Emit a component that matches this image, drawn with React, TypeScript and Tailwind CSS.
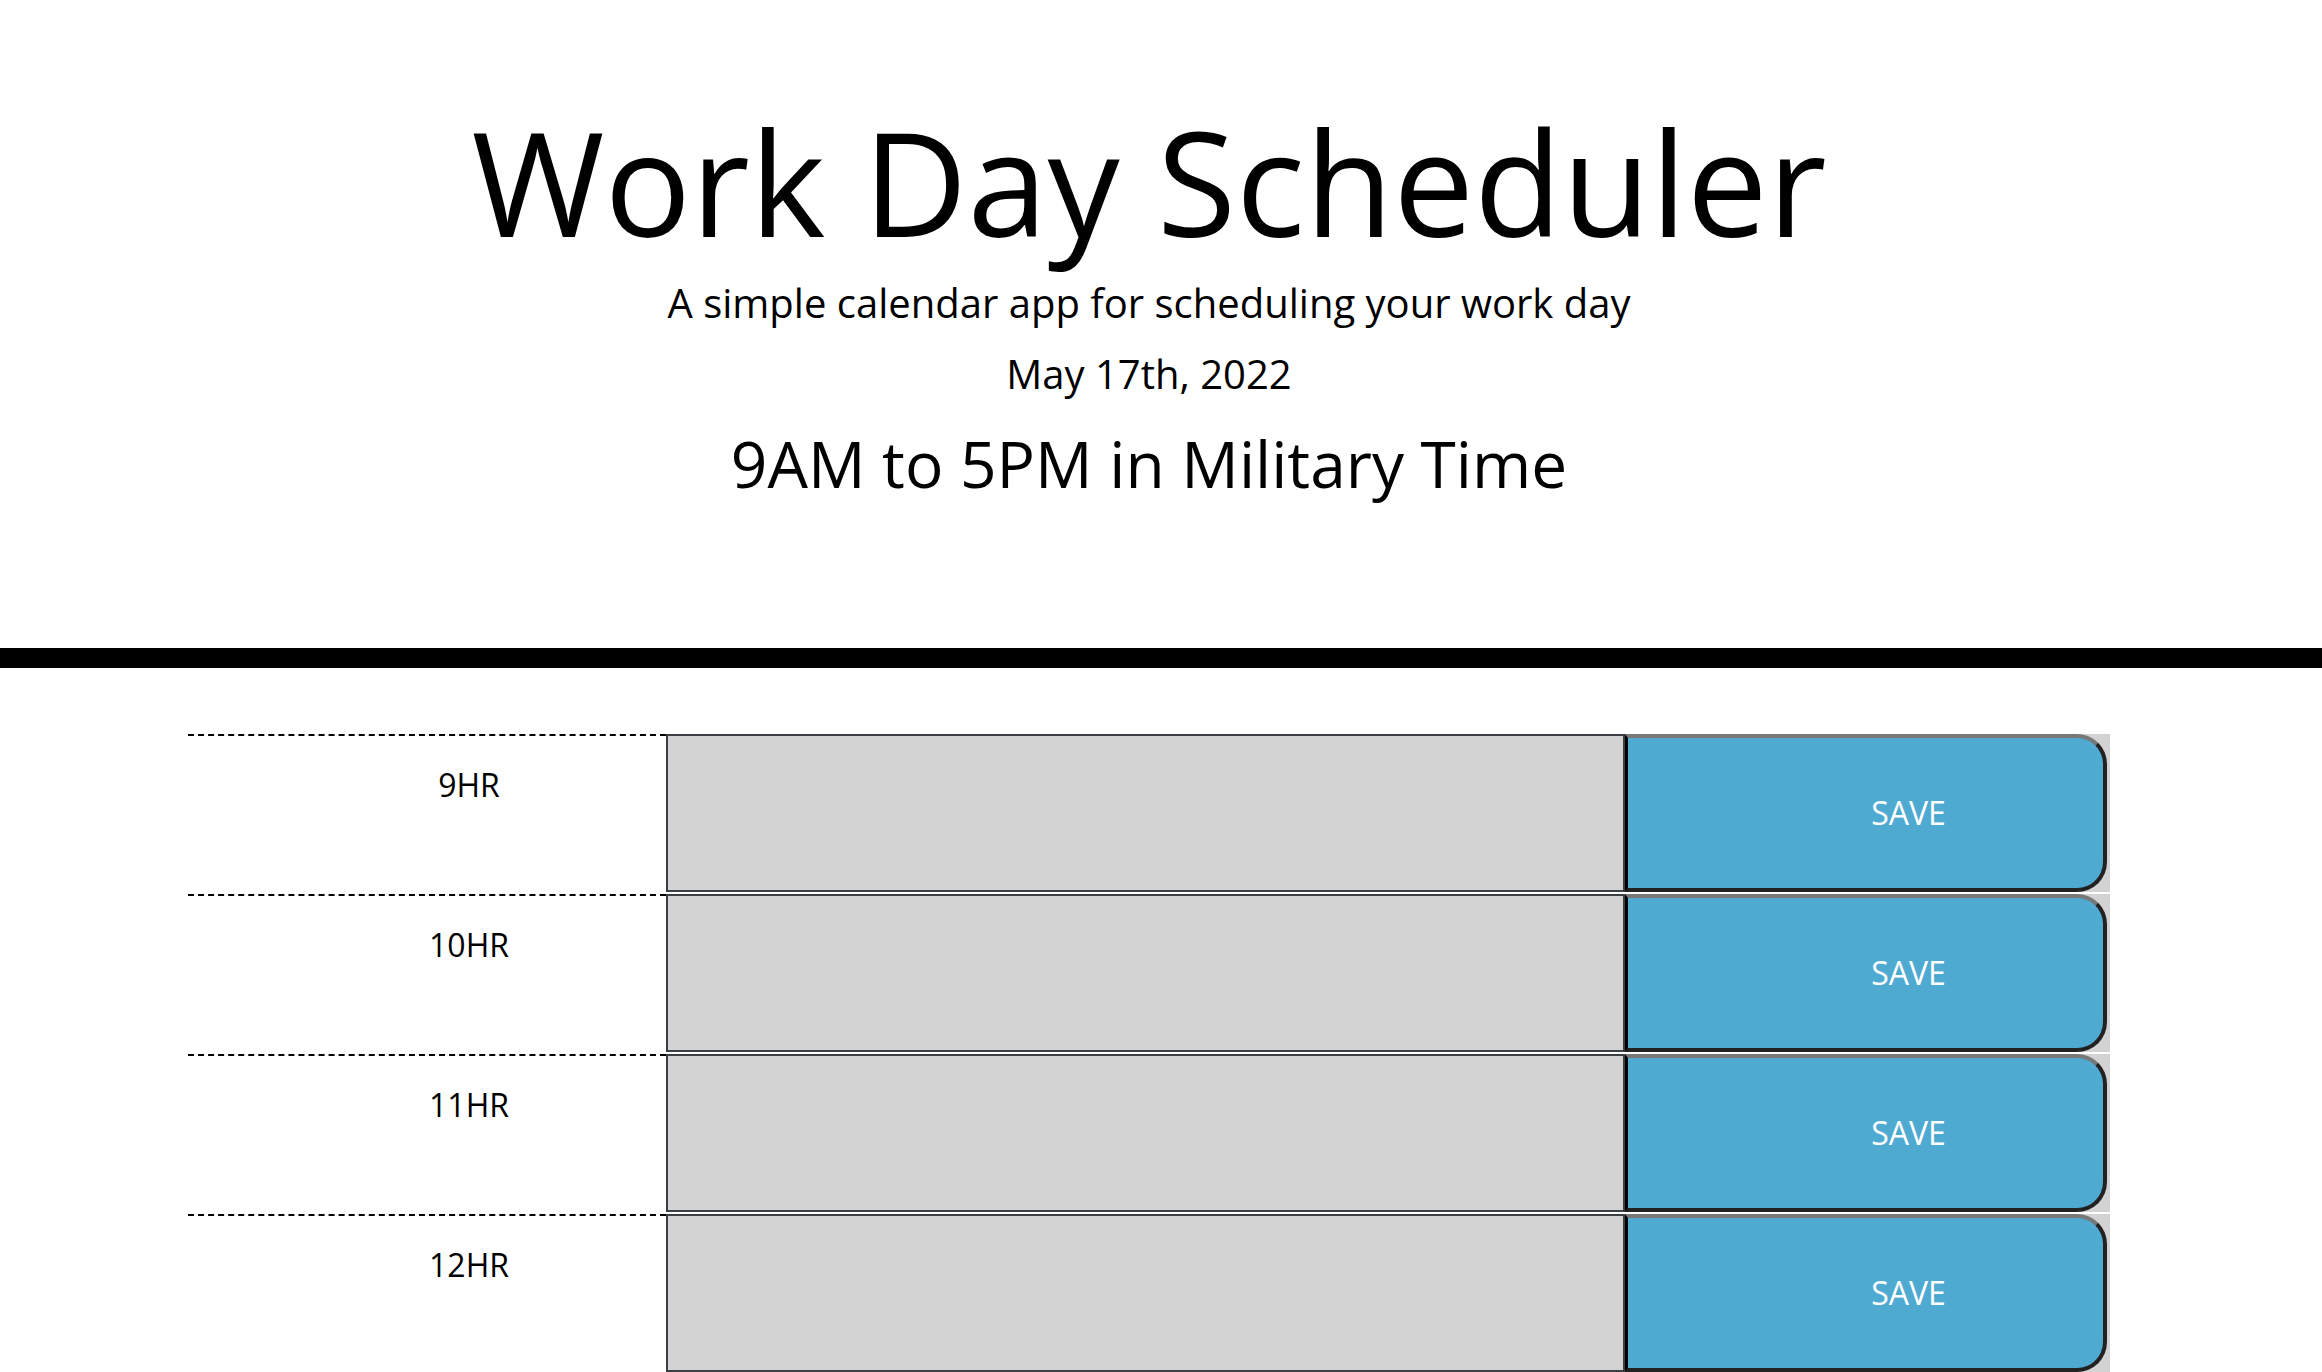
import React from "react";

const hours = [9, 10, 11, 12, 13, 14, 15, 16, 17];

export default function App() {
  return (
    <div className="min-h-screen bg-white text-black" style={{ fontFamily: '"Open Sans", "Liberation Sans", sans-serif' }}>
      <header className="text-center pt-[109px] pb-[152px] pr-[24px] border-b-[20px] border-black">
        <h1 className="text-[144px] leading-none font-normal">Work Day Scheduler</h1>
        <p className="mt-[30px] text-[40px] leading-none">A simple calendar app for scheduling your work day</p>
        <p className="mt-[31px] text-[40px] leading-none">May 17th, 2022</p>
        <h2 className="mt-[38px] text-[64px] leading-none">9AM to 5PM in Military Time</h2>
      </header>
      <main className="ml-[188px] w-[1922px] mt-[66px]">
        {hours.map((h) => (
          <div key={h} className="flex h-[160px] w-[1922px] bg-[#d3d3d3] border-b-2 border-white">
            <div className="w-[478px] shrink-0 bg-white border-t-2 border-dashed border-black pl-[84px] pt-[33px] text-center text-[32px] leading-none">
              {h}HR
            </div>
            <textarea
              className="w-[959px] shrink-0 h-full bg-transparent border-2 border-solid border-[#3c4045] resize-none p-[20px] text-[32px] outline-none"
              defaultValue=""
            />
            <button className="w-[482px] shrink-0 h-full bg-[#4faad1] text-white text-[32px] leading-none rounded-r-[30px] border-solid border-t-4 border-t-[#787878] border-r-4 border-r-[#222222] border-b-4 border-b-[#222222] border-l-[3px] border-l-black flex items-center justify-center pl-[86px]">
              SAVE
            </button>
          </div>
        ))}
      </main>
    </div>
  );
}
